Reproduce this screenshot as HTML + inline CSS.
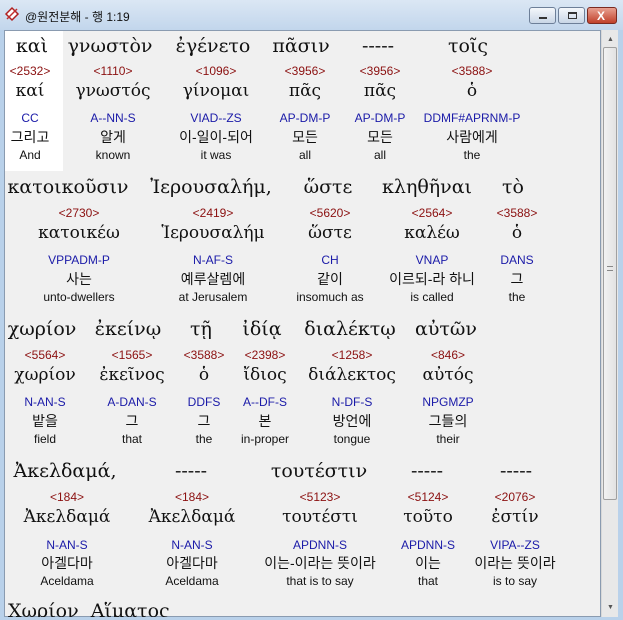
<!DOCTYPE html>
<html><head><meta charset="utf-8"><style>
*{margin:0;padding:0;box-sizing:border-box}
body{width:623px;height:620px;overflow:hidden;background:#b9d1ea;font-family:"Liberation Sans","Noto Sans CJK KR",sans-serif;position:relative}
#title{position:absolute;left:0;top:0;width:623px;height:30px;background:linear-gradient(#dbe7f4,#c2d6ec)}
#content{position:absolute;left:4px;top:30px;width:597px;height:587px;background:#f0f0f0;border:1px solid #8a9bb0;overflow:hidden}
#sb{position:absolute;left:601px;top:30px;width:17px;height:587px;background:#e8e8e8;border-left:1px solid #d8d8d8}
#thumb{position:absolute;left:1px;top:17px;width:14px;height:453px;background:linear-gradient(90deg,#f2f2f2,#e2e2e2);border:1px solid #a0a0a0;border-radius:2px}
.c{position:absolute;transform:translateX(-50%);white-space:nowrap;line-height:1}
.g{font-family:"DejaVu Serif","Liberation Serif",serif;font-size:19px;color:#111}
.l{font-family:"DejaVu Serif","Liberation Serif",serif;font-size:17px;color:#111}
.s{font-size:12px;color:#8b1010}
.p{font-size:12px;color:#1a1aa8}
.k{font-size:14px;color:#111}
.e{font-size:12px;color:#111}
.btn{position:absolute;top:7px;height:17px;border:1px solid #6d7f98;border-radius:3px;background:linear-gradient(#f4f7fb,#c9d6e6)}
</style></head><body>
<div id="title">
<svg style="position:absolute;left:3px;top:5px" width="18" height="18" viewBox="0 0 18 18"><path d="M3 9 L9 3 L15 9 L9 15 Z" fill="#fff" stroke="#b02020" stroke-width="1.5"/><path d="M4 14 L14 4" stroke="#c03030" stroke-width="1.5"/></svg>
<div style="position:absolute;left:25px;top:8px;font-size:12px;color:#111;font-family:'Liberation Sans','Noto Sans CJK KR',sans-serif">@원전분해 - 행 1:19</div>
<div class="btn" style="left:529px;width:27px"><div style="position:absolute;left:9px;top:9px;width:8px;height:2px;background:#333"></div></div>
<div class="btn" style="left:558px;width:27px"><div style="position:absolute;left:9px;top:4px;width:9px;height:7px;border:1px solid #333;border-top-width:2px"></div></div>
<div class="btn" style="left:587px;width:30px;background:linear-gradient(#e8a090,#c0402a);border-color:#7a2a20"><div style="position:absolute;left:9px;top:1px;color:#fff;font-weight:bold;font-size:12px">X</div></div>
</div>
<div id="content">
<div style="position:absolute;left:0;top:0;width:58px;height:140px;background:#fff"></div>
</div>
<div id="sb"><div style="position:absolute;left:5px;top:6px;font-size:7px;color:#555">▲</div><div id="thumb"><div style="position:absolute;left:3px;top:218px;width:6px;height:5px;border-top:1px solid #888;border-bottom:1px solid #888"></div></div><div style="position:absolute;left:5px;top:574px;font-size:7px;color:#555">▼</div></div>

<!-- row 1 -->
<div class="c g" style="left:32px;top:37px">καὶ</div>
<div class="c g" style="left:110px;top:37px">γνωστὸν</div>
<div class="c g" style="left:213px;top:37px">ἐγένετο</div>
<div class="c g" style="left:301px;top:37px">πᾶσιν</div>
<div class="c g" style="left:378px;top:37px">-----</div>
<div class="c g" style="left:468px;top:37px">τοῖς</div>
<div class="c s" style="left:30px;top:65px">&lt;2532&gt;</div>
<div class="c s" style="left:113px;top:65px">&lt;1110&gt;</div>
<div class="c s" style="left:216px;top:65px">&lt;1096&gt;</div>
<div class="c s" style="left:305px;top:65px">&lt;3956&gt;</div>
<div class="c s" style="left:380px;top:65px">&lt;3956&gt;</div>
<div class="c s" style="left:472px;top:65px">&lt;3588&gt;</div>
<div class="c l" style="left:30px;top:83px">καί</div>
<div class="c l" style="left:113px;top:83px">γνωστός</div>
<div class="c l" style="left:216px;top:83px">γίνομαι</div>
<div class="c l" style="left:305px;top:83px">πᾶς</div>
<div class="c l" style="left:380px;top:83px">πᾶς</div>
<div class="c l" style="left:472px;top:83px">ὁ</div>
<div class="c p" style="left:30px;top:112px">CC</div>
<div class="c p" style="left:113px;top:112px">A--NN-S</div>
<div class="c p" style="left:216px;top:112px">VIAD--ZS</div>
<div class="c p" style="left:305px;top:112px">AP-DM-P</div>
<div class="c p" style="left:380px;top:112px">AP-DM-P</div>
<div class="c p" style="left:472px;top:112px">DDMF#APRNM-P</div>
<div class="c k" style="left:30px;top:130px">그리고</div>
<div class="c k" style="left:113px;top:130px">알게</div>
<div class="c k" style="left:216px;top:130px">이-일이-되어</div>
<div class="c k" style="left:305px;top:130px">모든</div>
<div class="c k" style="left:380px;top:130px">모든</div>
<div class="c k" style="left:472px;top:130px">사람에게</div>
<div class="c e" style="left:30px;top:149px">And</div>
<div class="c e" style="left:113px;top:149px">known</div>
<div class="c e" style="left:216px;top:149px">it was</div>
<div class="c e" style="left:305px;top:149px">all</div>
<div class="c e" style="left:380px;top:149px">all</div>
<div class="c e" style="left:472px;top:149px">the</div>

<!-- row 2 -->
<div class="c g" style="left:68px;top:178px">κατοικοῦσιν</div>
<div class="c g" style="left:211px;top:178px">Ἰερουσαλήμ,</div>
<div class="c g" style="left:328px;top:178px">ὥστε</div>
<div class="c g" style="left:427px;top:178px">κληθῆναι</div>
<div class="c g" style="left:513px;top:178px">τὸ</div>
<div class="c s" style="left:79px;top:207px">&lt;2730&gt;</div>
<div class="c s" style="left:213px;top:207px">&lt;2419&gt;</div>
<div class="c s" style="left:330px;top:207px">&lt;5620&gt;</div>
<div class="c s" style="left:432px;top:207px">&lt;2564&gt;</div>
<div class="c s" style="left:517px;top:207px">&lt;3588&gt;</div>
<div class="c l" style="left:79px;top:225px">κατοικέω</div>
<div class="c l" style="left:213px;top:225px">Ἱερουσαλήμ</div>
<div class="c l" style="left:330px;top:225px">ὥστε</div>
<div class="c l" style="left:432px;top:225px">καλέω</div>
<div class="c l" style="left:517px;top:225px">ὁ</div>
<div class="c p" style="left:79px;top:254px">VPPADM-P</div>
<div class="c p" style="left:213px;top:254px">N-AF-S</div>
<div class="c p" style="left:330px;top:254px">CH</div>
<div class="c p" style="left:432px;top:254px">VNAP</div>
<div class="c p" style="left:517px;top:254px">DANS</div>
<div class="c k" style="left:79px;top:272px">사는</div>
<div class="c k" style="left:213px;top:272px">예루살렘에</div>
<div class="c k" style="left:330px;top:272px">같이</div>
<div class="c k" style="left:432px;top:272px">이르되-라 하니</div>
<div class="c k" style="left:517px;top:272px">그</div>
<div class="c e" style="left:79px;top:291px">unto-dwellers</div>
<div class="c e" style="left:213px;top:291px">at Jerusalem</div>
<div class="c e" style="left:330px;top:291px">insomuch as</div>
<div class="c e" style="left:432px;top:291px">is called</div>
<div class="c e" style="left:517px;top:291px">the</div>

<!-- row 3 -->
<div class="c g" style="left:42px;top:320px">χωρίον</div>
<div class="c g" style="left:128px;top:320px">ἐκείνῳ</div>
<div class="c g" style="left:201px;top:320px">τῇ</div>
<div class="c g" style="left:262px;top:320px">ἰδίᾳ</div>
<div class="c g" style="left:350px;top:320px">διαλέκτῳ</div>
<div class="c g" style="left:446px;top:320px">αὐτῶν</div>
<div class="c s" style="left:45px;top:349px">&lt;5564&gt;</div>
<div class="c s" style="left:132px;top:349px">&lt;1565&gt;</div>
<div class="c s" style="left:204px;top:349px">&lt;3588&gt;</div>
<div class="c s" style="left:265px;top:349px">&lt;2398&gt;</div>
<div class="c s" style="left:352px;top:349px">&lt;1258&gt;</div>
<div class="c s" style="left:448px;top:349px">&lt;846&gt;</div>
<div class="c l" style="left:45px;top:367px">χωρίον</div>
<div class="c l" style="left:132px;top:367px">ἐκεῖνος</div>
<div class="c l" style="left:204px;top:367px">ὁ</div>
<div class="c l" style="left:265px;top:367px">ἴδιος</div>
<div class="c l" style="left:352px;top:367px">διάλεκτος</div>
<div class="c l" style="left:448px;top:367px">αὐτός</div>
<div class="c p" style="left:45px;top:396px">N-AN-S</div>
<div class="c p" style="left:132px;top:396px">A-DAN-S</div>
<div class="c p" style="left:204px;top:396px">DDFS</div>
<div class="c p" style="left:265px;top:396px">A--DF-S</div>
<div class="c p" style="left:352px;top:396px">N-DF-S</div>
<div class="c p" style="left:448px;top:396px">NPGMZP</div>
<div class="c k" style="left:45px;top:414px">밭을</div>
<div class="c k" style="left:132px;top:414px">그</div>
<div class="c k" style="left:204px;top:414px">그</div>
<div class="c k" style="left:265px;top:414px">본</div>
<div class="c k" style="left:352px;top:414px">방언에</div>
<div class="c k" style="left:448px;top:414px">그들의</div>
<div class="c e" style="left:45px;top:433px">field</div>
<div class="c e" style="left:132px;top:433px">that</div>
<div class="c e" style="left:204px;top:433px">the</div>
<div class="c e" style="left:265px;top:433px">in-proper</div>
<div class="c e" style="left:352px;top:433px">tongue</div>
<div class="c e" style="left:448px;top:433px">their</div>

<!-- row 4 -->
<div class="c g" style="left:65px;top:462px">Ἀκελδαμά,</div>
<div class="c g" style="left:191px;top:462px">-----</div>
<div class="c g" style="left:319px;top:462px">τουτέστιν</div>
<div class="c g" style="left:427px;top:462px">-----</div>
<div class="c g" style="left:516px;top:462px">-----</div>
<div class="c s" style="left:67px;top:491px">&lt;184&gt;</div>
<div class="c s" style="left:192px;top:491px">&lt;184&gt;</div>
<div class="c s" style="left:320px;top:491px">&lt;5123&gt;</div>
<div class="c s" style="left:428px;top:491px">&lt;5124&gt;</div>
<div class="c s" style="left:515px;top:491px">&lt;2076&gt;</div>
<div class="c l" style="left:67px;top:509px">Ἀκελδαμά</div>
<div class="c l" style="left:192px;top:509px">Ἀκελδαμά</div>
<div class="c l" style="left:320px;top:509px">τουτέστι</div>
<div class="c l" style="left:428px;top:509px">τοῦτο</div>
<div class="c l" style="left:515px;top:509px">ἐστίν</div>
<div class="c p" style="left:67px;top:539px">N-AN-S</div>
<div class="c p" style="left:192px;top:539px">N-AN-S</div>
<div class="c p" style="left:320px;top:539px">APDNN-S</div>
<div class="c p" style="left:428px;top:539px">APDNN-S</div>
<div class="c p" style="left:515px;top:539px">VIPA--ZS</div>
<div class="c k" style="left:67px;top:556px">아겔다마</div>
<div class="c k" style="left:192px;top:556px">아겔다마</div>
<div class="c k" style="left:320px;top:556px">이는-이라는 뜻이라</div>
<div class="c k" style="left:428px;top:556px">이는</div>
<div class="c k" style="left:515px;top:556px">이라는 뜻이라</div>
<div class="c e" style="left:67px;top:575px">Aceldama</div>
<div class="c e" style="left:192px;top:575px">Aceldama</div>
<div class="c e" style="left:320px;top:575px">that is to say</div>
<div class="c e" style="left:428px;top:575px">that</div>
<div class="c e" style="left:515px;top:575px">is to say</div>

<!-- row 5 clipped -->
<div style="position:absolute;left:5px;top:600px;width:595px;height:17px;overflow:hidden">
<div class="g" style="position:absolute;left:3px;top:2px;white-space:nowrap;line-height:1">Χωρίον &nbsp;Αἵματος</div>
</div>
</body></html>
